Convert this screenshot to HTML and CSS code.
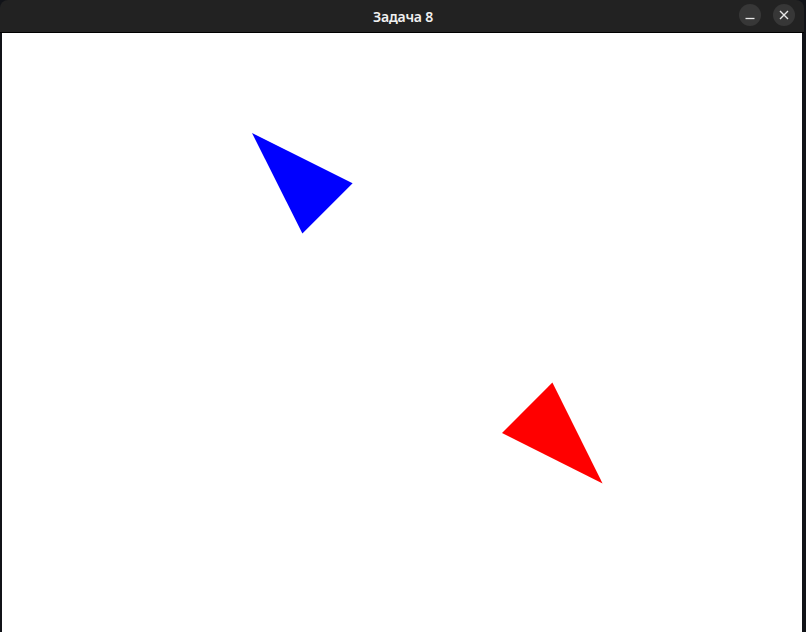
FILE: index.html
```html
<!DOCTYPE html>
<html lang="ru">
<head>
<meta charset="utf-8">
<title>Задача 8</title>
<link rel="stylesheet" href="styles.css">
</head>
<body>
<div class="window">
  <header class="titlebar">
    <span class="title">Задача 8</span>
    <div class="controls">
      <button class="ctl" aria-label="Свернуть">
        <svg width="10" height="10" viewBox="0 0 10 10"><path d="M0.5 8.5H9.5" stroke="#e8e8e8" stroke-width="1.3"/></svg>
      </button>
      <button class="ctl" aria-label="Закрыть">
        <svg width="10" height="10" viewBox="0 0 10 10"><path d="M1 1L9 9M9 1L1 9" stroke="#e8e8e8" stroke-width="1.4"/></svg>
      </button>
    </div>
  </header>
  <main class="canvas">
    <svg class="scene" width="800" height="599" viewBox="2 33 800 599">
      <polygon points="252,133 352.6,183.2 302.4,233.6" fill="#0000ff"/>
      <polygon points="552.4,382.6 502,433 602.6,483.6" fill="#ff0000"/>
    </svg>
  </main>
</div>
</body>
</html>
```
FILE: styles.css
```css
html, body {
  margin: 0;
  padding: 0;
  height: 100%;
  overflow: hidden;
}
body {
  background: #111318;
  font-family: "Noto Sans", "DejaVu Sans", sans-serif;
}
.window {
  width: 804px;
  height: 632px;
  display: flex;
  flex-direction: column;
}
.titlebar {
  height: 32px;
  flex: none;
  background: #222222;
  border-radius: 8px 8px 0 0;
  border-bottom: 1px solid #000;
  position: relative;
  display: flex;
  align-items: center;
  justify-content: center;
}
.title {
  color: #f0f0f0;
  font-size: 14px;
  font-weight: 600;
  letter-spacing: -0.2px;
  margin-left: 2px;
}
.controls {
  position: absolute;
  right: 9px;
  top: 4px;
  display: flex;
  gap: 12px;
}
.ctl {
  width: 22px;
  height: 22px;
  border: none;
  border-radius: 50%;
  background: #373737;
  padding: 0;
  display: flex;
  align-items: center;
  justify-content: center;
}
.canvas {
  flex: 1;
  margin-left: 2px;
  width: 800px;
  background: #ffffff;
}
.scene {
  display: block;
}
```
